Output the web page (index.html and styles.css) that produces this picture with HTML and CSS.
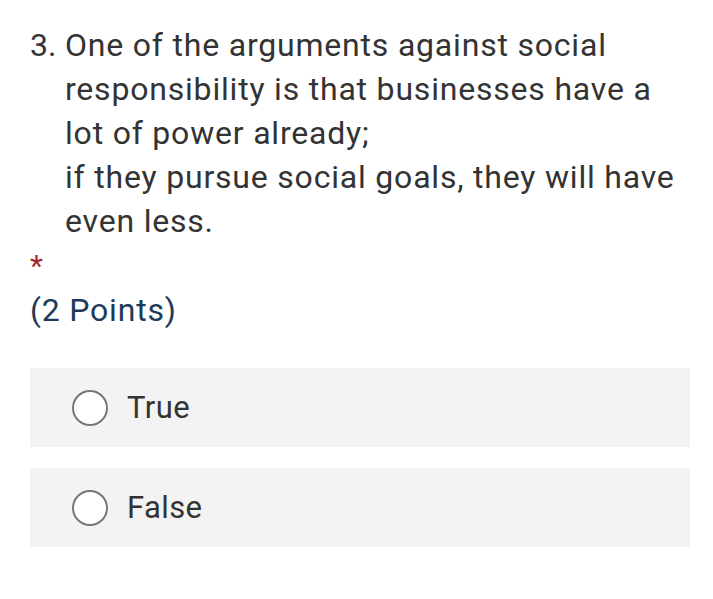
FILE: index.html
```html
<!DOCTYPE html>
<html>
<head>
<meta charset="utf-8">
<link rel="stylesheet" href="styles.css">
</head>
<body>
<div class="question">
  <div class="title">
    <span class="num">3.</span>
    <span class="text">One of the arguments against social responsibility is that businesses have a lot of power already;<br>if they pursue social goals, they will have even less.</span>
  </div>
  <div class="star">*</div>
  <div class="points">(2 Points)</div>
  <div class="options">
    <label class="option"><span class="radio"></span><span class="label">True</span></label>
    <label class="option"><span class="radio"></span><span class="label">False</span></label>
  </div>
</div>
</body>
</html>
```
FILE: styles.css
```css
html, body {
  margin: 0;
  background: #ffffff;
}
body {
  font-family: Roboto, "Noto Sans", sans-serif;
  color: #333333;
}
.question {
  padding: 23px 23px 0 30px;
}
.title {
  display: flex;
  font-size: 32px;
  letter-spacing: 0.8px;
  line-height: 44px;
}
.num {
  width: 35px;
  flex: none;
  letter-spacing: 0;
}
.text {
  flex: 1;
}
.star {
  color: #a4262c;
  font-size: 30px;
  line-height: 32px;
  margin-top: 7px;
  height: 33px;
}
.points {
  color: #1e3a5a;
  font-size: 32px;
  letter-spacing: 0.8px;
  line-height: 40px;
  margin-top: 7px;
}
.options {
  margin-top: 38px;
  width: 660px;
  display: flex;
  flex-direction: column;
  gap: 21px;
}
.option {
  background: #f3f3f3;
  height: 79px;
  display: flex;
  align-items: center;
  padding-left: 42px;
}
.radio {
  width: 32px;
  height: 32px;
  border: 2px solid #777777;
  border-radius: 50%;
  background: #fff;
  flex: none;
}
.label {
  margin-left: 19px;
  font-size: 31px;
  letter-spacing: 0.4px;
  color: #333333;
}
```
